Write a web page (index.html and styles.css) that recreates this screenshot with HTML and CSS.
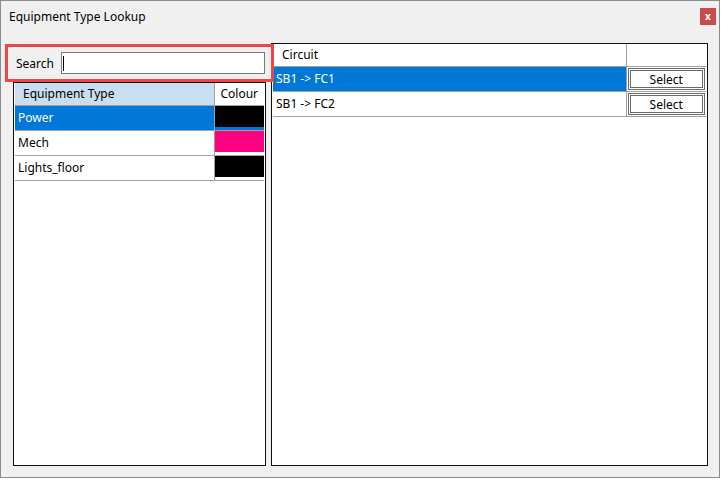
FILE: index.html
```html
<!DOCTYPE html>
<html lang="en">
<head>
    <meta charset="UTF-8">
    <title>Equipment Type Lookup</title>
    <link rel="stylesheet" href="styles.css">
</head>
<body>
    <div class="window">
        <div class="titlebar">
            <span class="title">Equipment Type Lookup</span>
            <span class="close">x</span>
        </div>

        <div class="main">
            <div class="left">
                <div class="search-row">
                    <label for="search">Search</label>
                    <div class="search-box"><span class="caret"></span></div>
                </div>

                <div class="panel">
                    <table class="grid types">
                        <thead>
                            <tr>
                                <th class="type-head">Equipment Type</th>
                                <th class="colour-head">Colour</th>
                            </tr>
                        </thead>
                        <tbody>
                            <tr class="selected">
                                <td>Power</td>
                                <td class="swatch-cell"><div class="swatch black"></div></td>
                            </tr>
                            <tr>
                                <td>Mech</td>
                                <td class="swatch-cell"><div class="swatch pink"></div></td>
                            </tr>
                            <tr>
                                <td>Lights_floor</td>
                                <td class="swatch-cell"><div class="swatch black"></div></td>
                            </tr>
                        </tbody>
                    </table>
                </div>
            </div>

            <div class="panel right">
                <table class="grid circuits">
                    <thead>
                        <tr>
                            <th class="circuit-head">Circuit</th>
                            <th class="action-head"></th>
                        </tr>
                    </thead>
                    <tbody>
                        <tr class="selected">
                            <td>SB1 -&gt; FC1</td>
                            <td class="action"><button>Select</button></td>
                        </tr>
                        <tr>
                            <td>SB1 -&gt; FC2</td>
                            <td class="action"><button>Select</button></td>
                        </tr>
                    </tbody>
                </table>
            </div>
        </div>
    </div>
</body>
</html>
```

FILE: styles.css
```css
body {
    margin: 0;
    background: #ffffff;
    font-family: "Noto Sans", "Open Sans", sans-serif;
    font-size: 12px;
    color: #000;
}

.window {
    width: 720px;
    height: 478px;
    box-sizing: border-box;
    border: 1px solid #8c8c8c;
    background: #f0f0f0;
    display: flex;
    flex-direction: column;
}

.titlebar {
    height: 42px;
    display: flex;
    justify-content: space-between;
    align-items: flex-start;
    padding: 0 3px 0 8px;
}

.title {
    margin-top: 7px;
    font-size: 12px;
}

.close {
    margin-top: 7px;
    width: 16px;
    height: 17px;
    background: #c94c4c;
    color: #fff;
    font-weight: bold;
    font-size: 10px;
    line-height: 16px;
    text-align: center;
}

.main {
    flex: 1;
    display: grid;
    grid-template-columns: 253px 436px;
    column-gap: 6px;
    padding: 0 0 11px 12px;
}

.left {
    display: flex;
    flex-direction: column;
    padding-top: 9px;
    gap: 8px;
}

.search-row {
    height: 22px;
    display: flex;
    align-items: center;
    outline: 3px solid #ee4646;
    outline-offset: 5px;
    position: relative;
    z-index: 1;
}

.search-row label {
    width: 45px;
    padding-left: 3px;
}

.search-box {
    flex: 1;
    height: 22px;
    margin-right: 1px;
    box-sizing: border-box;
    border: 1px solid #7a7a7a;
    background: #fff;
    padding: 3px 0 0 1px;
}

.caret {
    display: block;
    width: 1px;
    height: 15px;
    background: #000;
}

.panel {
    flex: 1;
    border: 1px solid #101010;
    background: #fff;
    padding: 0 1px;
}

.right {
    margin-left: -1px;
}

.grid {
    border-collapse: collapse;
    width: 100%;
}

.grid th,
.grid td {
    border: 1px solid #a0a0a0;
    font-weight: normal;
    text-align: left;
    padding: 0 0 0 3px;
    white-space: nowrap;
    box-sizing: border-box;
}

.grid th {
    height: 22px;
}

.grid td {
    height: 25px;
}

.grid tr:first-child th {
    border-top: none;
}

.grid th:first-child,
.grid td:first-child {
    border-left: none;
}

.grid th:last-child,
.grid td:last-child {
    border-right: none;
}

.types .type-head {
    background: #c7def3;
    padding-left: 8px;
}

.types .colour-head {
    width: 50px;
    text-align: center;
    padding: 0;
}

.grid tr.selected td {
    background: #0078d7;
    color: #fff;
}

.types .swatch-cell {
    padding: 0;
    background: #fff;
}

.types tr.selected .swatch-cell {
    background: #0078d7;
}

.swatch {
    height: 21px;
    margin-bottom: 2px;
}

.black {
    background: #000;
}

.pink {
    background: #ff0080;
}

.circuits .circuit-head {
    padding-left: 9px;
}

.circuits .action-head,
.circuits .action {
    width: 80px;
}

.circuits td.action,
.circuits tr.selected td.action {
    padding: 1px 1px 0 1px;
    background: #fff;
}

.circuits button {
    display: block;
    width: 100%;
    height: 22px;
    border: 3px double #6a6a6a;
    background: #fff;
    font-family: inherit;
    font-size: 12px;
    color: #000;
    padding: 0;
}
```
